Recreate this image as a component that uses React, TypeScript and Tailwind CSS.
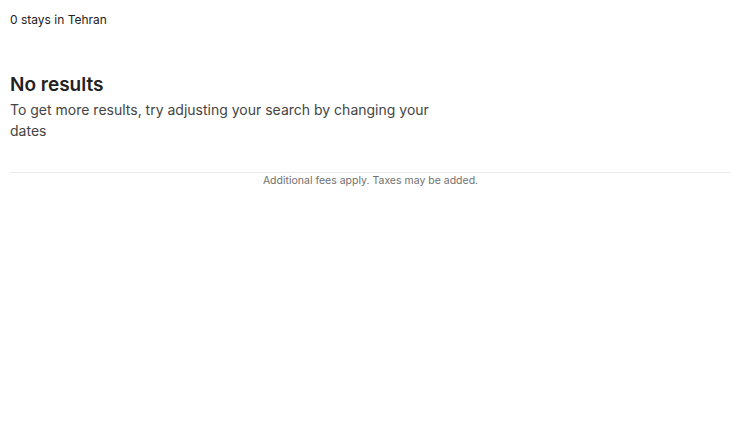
const App = () => {
  return (
    <div className="min-h-screen bg-white text-[#222222]" style={{ fontFamily: 'Inter, "Noto Sans", sans-serif' }}>
      <div className="pl-[10px] pr-[19px]">
        {/* Header */}
        <div className="pt-[12px] text-[12px] leading-[16px] text-[#222222]">0 stays in Tehran</div>

        {/* Empty state */}
        <div className="mt-[45px] max-w-[440px]">
          <h1 className="text-[19px] font-semibold leading-[24px]">No results</h1>
          <p className="mt-[2px] text-[14px] leading-[21px] text-[#444444]">
            To get more results, try adjusting your search by changing your dates
          </p>
        </div>

        {/* Footer */}
        <div className="mt-[31px] border-t border-[#ebebeb] pt-[1px] text-center text-[10.5px] leading-[14px] text-[#717171]">
          Additional fees apply. Taxes may be added.
        </div>
      </div>
    </div>
  );
};

export default App;
